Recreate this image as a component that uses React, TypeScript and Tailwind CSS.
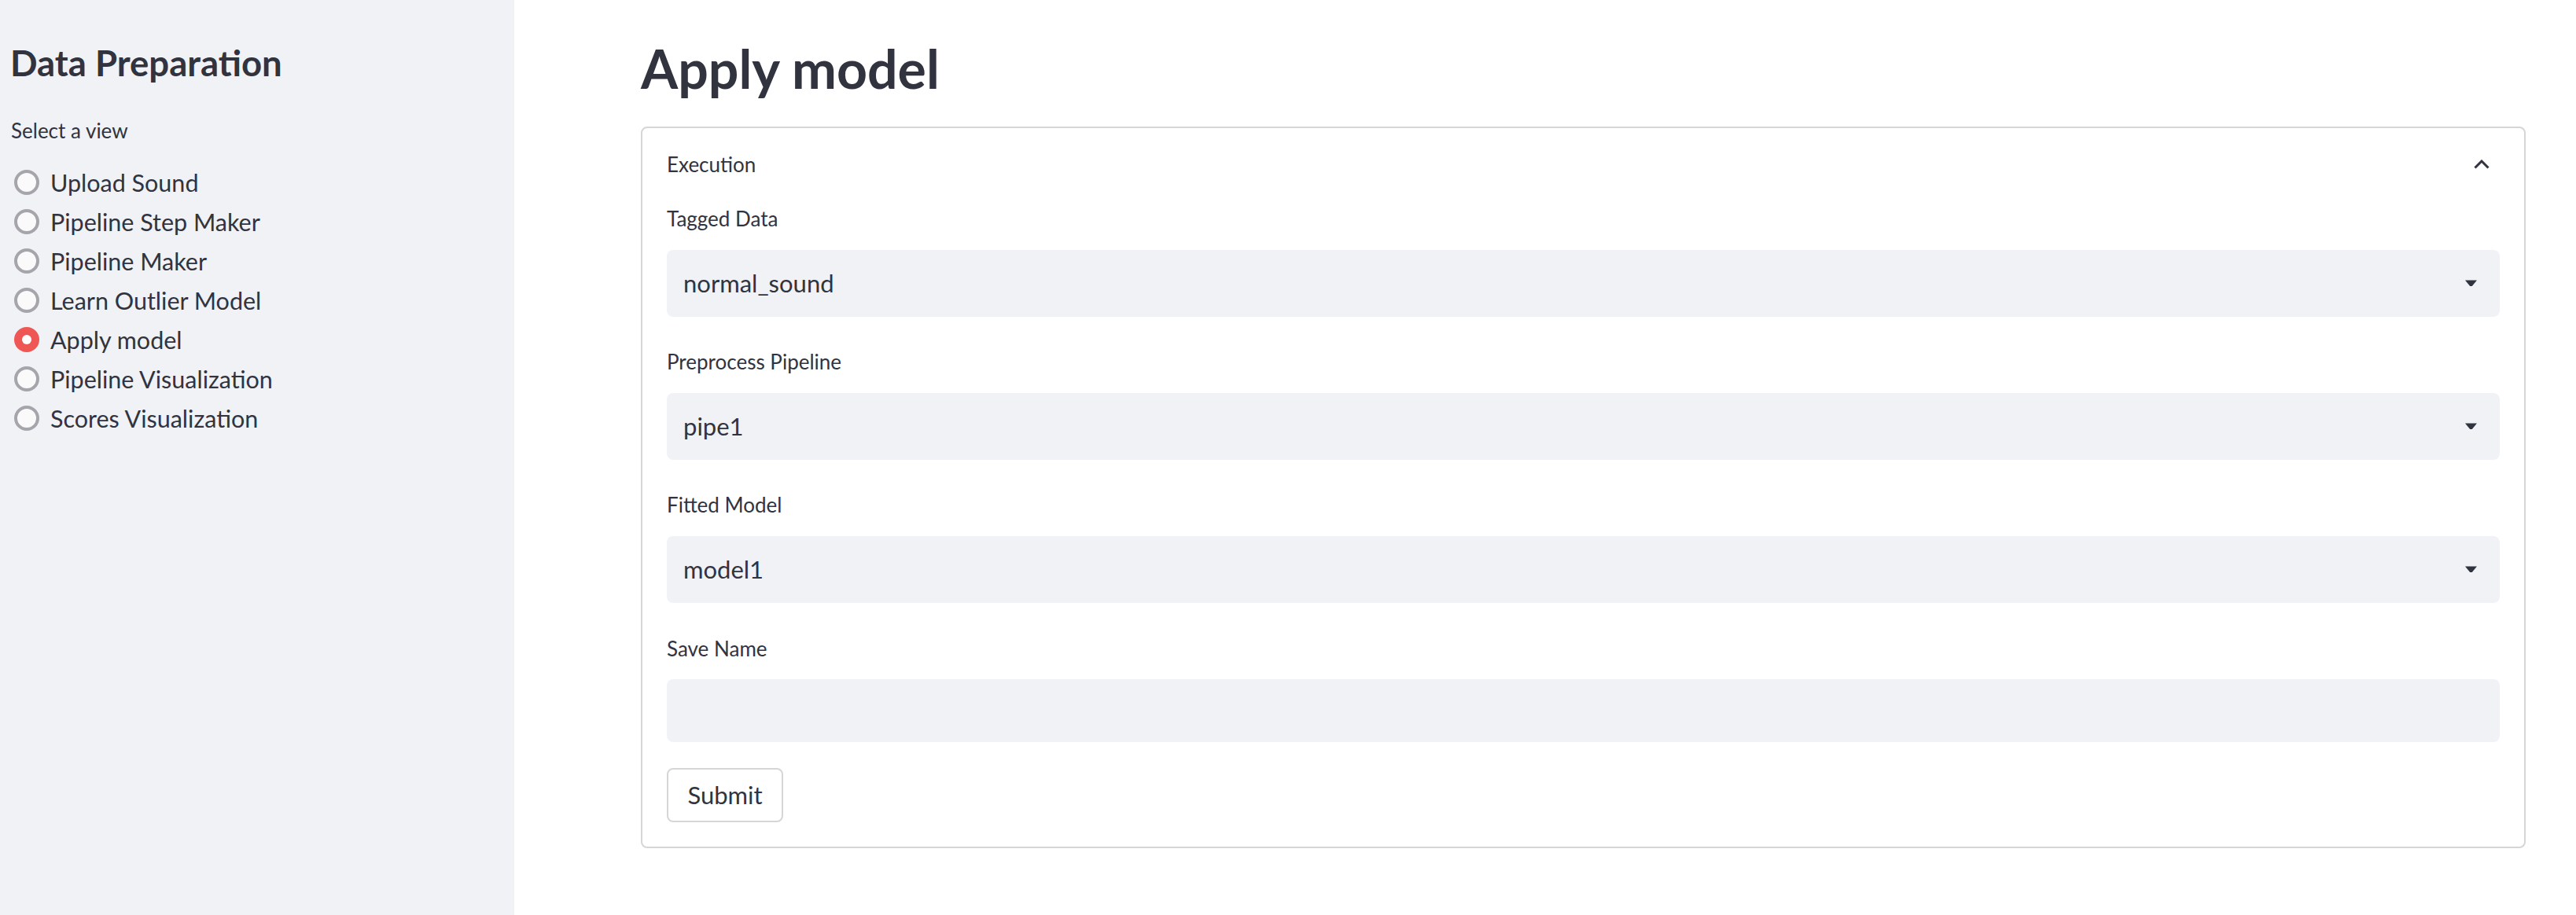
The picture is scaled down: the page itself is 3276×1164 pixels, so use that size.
import React, { useState } from 'react';

const views = [
  'Upload Sound',
  'Pipeline Step Maker',
  'Pipeline Maker',
  'Learn Outlier Model',
  'Apply model',
  'Pipeline Visualization',
  'Scores Visualization',
];

const Caret = () => (
  <svg width="15" height="9" viewBox="0 0 15 9" className="shrink-0">
    <polygon points="0,0.5 15,0.5 8.8,8 6.2,8" fill="#31333f" />
  </svg>
);

const SelectBox = ({ label, value }: { label: string; value: string }) => (
  <div>
    <div className="text-[26px] leading-[36px] text-[#31333f]">{label}</div>
    <div className="mt-[22px] h-[85px] rounded-[8px] bg-[#f0f2f6] flex items-center justify-between pl-[21px] pr-[29px]">
      <span className="text-[31px] text-[#31333f]">{value}</span>
      <Caret />
    </div>
  </div>
);

export default function App() {
  const [view, setView] = useState('Apply model');

  return (
    <div className="flex h-screen w-full bg-white text-[#31333f] font-['Lato',sans-serif]">
      {/* Sidebar */}
      <aside className="w-[654px] shrink-0 bg-[#f0f2f6] pt-[52px] px-[14px]">
        <h2 className="text-[45.5px] leading-[56px] font-bold -ml-[1px]">Data Preparation</h2>
        <div className="mt-[40px] text-[26px] leading-[36px]">Select a view</div>
        <div className="mt-[23px] flex flex-col">
          {views.map((v) => {
            const active = v === view;
            return (
              <label key={v} className="h-[50px] flex items-center cursor-pointer" onClick={() => setView(v)}>
                <span
                  className={
                    active
                      ? 'ml-[4px] w-[32px] h-[32px] rounded-full bg-[#ee5753] flex items-center justify-center shrink-0'
                      : 'ml-[4px] w-[32px] h-[32px] rounded-full border-[4px] border-[#a5a5ab] bg-[#fafafb] shrink-0'
                  }
                >
                  {active && <span className="w-[12px] h-[12px] rounded-full bg-white" />}
                </span>
                <span className="ml-[14px] text-[30.5px] leading-[40px]">{v}</span>
              </label>
            );
          })}
        </div>
      </aside>

      {/* Main */}
      <main className="flex-1 pt-[37px] pl-[161px] pr-[64px]">
        <h1 className="text-[68px] leading-[100px] font-bold">{view}</h1>

        <section className="mt-[24px] border-2 border-[#d6d6d9] rounded-[8px]">
          <div className="h-[92px] flex items-center justify-between pl-[31px] pr-[44px]">
            <span className="text-[26px] leading-[36px]">Execution</span>
            <svg width="20" height="12" viewBox="0 0 20 12" fill="none">
              <path d="M1.5 10.5 L10 2 L18.5 10.5" stroke="#31333f" strokeWidth="3" />
            </svg>
          </div>

          <div className="px-[31px] pb-[31px] pt-[5px] flex flex-col gap-[39px]">
            <SelectBox label="Tagged Data" value="normal_sound" />
            <SelectBox label="Preprocess Pipeline" value="pipe1" />
            <SelectBox label="Fitted Model" value="model1" />
            <div>
              <div className="mt-[1px] text-[26px] leading-[36px]">Save Name</div>
              <input
                className="mt-[21px] block w-full h-[80px] rounded-[8px] bg-[#f0f2f6] px-[21px] text-[31px] outline-none"
                type="text"
              />
              <button className="mt-[33px] w-[148px] h-[69px] border-2 border-[#d6d6d9] rounded-[8px] bg-white text-[31px] text-[#31333f]">
                Submit
              </button>
            </div>
          </div>
        </section>
      </main>
    </div>
  );
}
